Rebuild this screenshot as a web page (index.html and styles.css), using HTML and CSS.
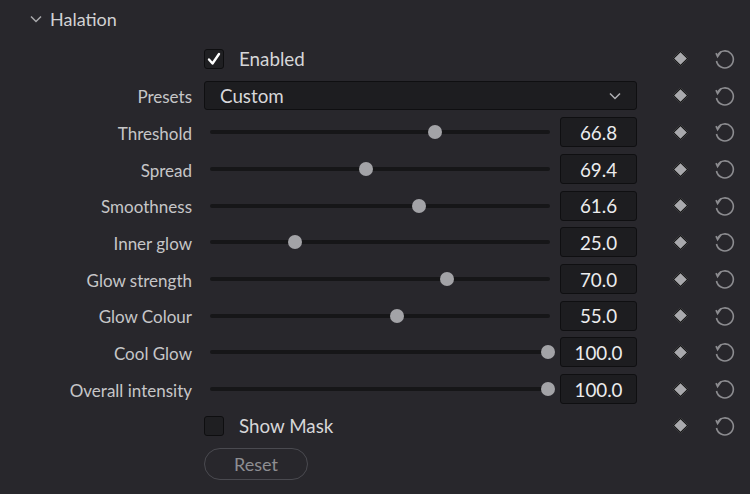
FILE: index.html
```html
<!DOCTYPE html>
<html lang="en">
<head>
  <meta charset="UTF-8">
  <title>Halation</title>
  <link rel="stylesheet" href="styles.css">
</head>
<body>
  <div class="panel">
    <div class="panel-head">
      <svg class="caret" width="14" height="10" viewBox="0 0 14 10"><path d="M2 2.5 L7 7.5 L12 2.5" fill="none" stroke="#a9a9ad" stroke-width="1.5"/></svg>
      <span>Halation</span>
    </div>

    <div class="row">
      <div class="label"></div>
      <div class="main">
        <label class="check"><span class="box checked"><svg width="16" height="16" viewBox="0 0 16 16"><path d="M3 8.5 L6.5 12.5 L13 3" fill="none" stroke="#fff" stroke-width="2.4" stroke-linecap="round" stroke-linejoin="round"/></svg></span>Enabled</label>
      </div>
      <div class="keyframe"></div>
      <svg class="undo" viewBox="0 0 24 24"><path d="M5.6 8 A8.5 8.5 0 1 1 4.5 14" fill="none" stroke="#8c8c90" stroke-width="1.6"/><path d="M8 4.8 L4.6 9.6 L3 6.2" fill="none" stroke="#8c8c90" stroke-width="1.6" transform="translate(1 0)"/></svg>
    </div>

    <div class="row">
      <div class="label">Presets</div>
      <div class="main">
        <div class="select">Custom
          <svg width="14" height="10" viewBox="0 0 14 10"><path d="M2 2.5 L7 7.5 L12 2.5" fill="none" stroke="#b0b0b4" stroke-width="1.5"/></svg>
        </div>
      </div>
      <div class="keyframe"></div>
      <svg class="undo" viewBox="0 0 24 24"><path d="M5.6 8 A8.5 8.5 0 1 1 4.5 14" fill="none" stroke="#8c8c90" stroke-width="1.6"/><path d="M8 4.8 L4.6 9.6 L3 6.2" fill="none" stroke="#8c8c90" stroke-width="1.6" transform="translate(1 0)"/></svg>
    </div>

    <div id="sliders"></div>

    <div class="row">
      <div class="label"></div>
      <div class="main">
        <label class="check"><span class="box"></span>Show Mask</label>
      </div>
      <div class="keyframe"></div>
      <svg class="undo" viewBox="0 0 24 24"><path d="M5.6 8 A8.5 8.5 0 1 1 4.5 14" fill="none" stroke="#8c8c90" stroke-width="1.6"/><path d="M8 4.8 L4.6 9.6 L3 6.2" fill="none" stroke="#8c8c90" stroke-width="1.6" transform="translate(1 0)"/></svg>
    </div>

    <div class="row reset-row">
      <div class="label"></div>
      <div class="main">
        <button class="reset">Reset</button>
      </div>
    </div>
  </div>

  <script>
    // label, shown value, thumb position (%)
    const params = [
      ['Threshold', '66.8', 66.6],
      ['Spread', '69.4', 46.2],
      ['Smoothness', '61.6', 61.8],
      ['Inner glow', '25.0', 25.1],
      ['Glow strength', '70.0', 70.1],
      ['Glow Colour', '55.0', 55.3],
      ['Cool Glow', '100.0', 100],
      ['Overall intensity', '100.0', 100]
    ];

    const undoIcon = '<svg class="undo" viewBox="0 0 24 24"><path d="M5.6 8 A8.5 8.5 0 1 1 4.5 14" fill="none" stroke="#8c8c90" stroke-width="1.6"/><path d="M8 4.8 L4.6 9.6 L3 6.2" fill="none" stroke="#8c8c90" stroke-width="1.6" transform="translate(1 0)"/></svg>';

    const list = document.getElementById('sliders');
    params.forEach(([name, value, pos]) => {
      const row = document.createElement('div');
      row.className = 'row';
      row.innerHTML =
        `<div class="label">${name}</div>
         <div class="main">
           <div class="slider"><div class="rail"></div>
             <div class="travel"><span class="thumb" style="left:${pos}%"></span></div>
           </div>
           <div class="value">${value}</div>
         </div>
         <div class="keyframe"></div>${undoIcon}`;
      list.appendChild(row);
    });
  </script>
</body>
</html>
```

FILE: styles.css
```css
body {
  margin: 0;
  background: #28272c;
  font-family: Lato, "Open Sans", sans-serif;
  color: #c6c6c8;
  font-size: 17px;
}

.panel { width: 750px; }

.panel-head {
  height: 40.6px;
  display: flex;
  align-items: center;
  padding-left: 29px;
  font-size: 18px;
  color: #d2d2d4;
  box-sizing: border-box;
  padding-bottom: 2px;
}
.caret { margin-right: 7px; }

.row {
  height: 36.7px;
  display: flex;
  align-items: center;
}

.label {
  width: 192px;
  text-align: right;
  flex: none;
  white-space: nowrap;
  padding-top: 2px;
}

.main {
  width: 433px;
  margin-left: 12px;
  flex: none;
  display: flex;
  align-items: center;
}

.check {
  display: flex;
  align-items: center;
  font-size: 18.8px;
  color: #d6d6d8;
}
.box {
  width: 20px;
  height: 20px;
  box-sizing: border-box;
  background: #1f1f22;
  border: 1px solid #0e0e10;
  border-radius: 3px;
  margin-right: 15px;
  display: flex;
  align-items: center;
  justify-content: center;
}

.select {
  width: 100%;
  height: 29px;
  box-sizing: border-box;
  background: #1d1d20;
  border: 1px solid #0f0f11;
  border-radius: 3px;
  display: flex;
  align-items: center;
  justify-content: space-between;
  padding: 0 14px 0 15px;
  font-size: 18.8px;
  color: #d8d8da;
}

.slider {
  flex: 1;
  height: 30px;
  position: relative;
  margin-right: 10px;
}
.rail {
  position: absolute;
  left: 6px;
  right: 0;
  top: 13px;
  height: 4px;
  border-radius: 2px;
  background: #161618;
}
.travel {
  position: absolute;
  left: 6px;
  right: 2px;
  top: 0;
  bottom: 0;
}
.thumb {
  position: absolute;
  top: 8px;
  width: 14px;
  height: 14px;
  margin-left: -7px;
  border-radius: 50%;
  background: #a3a3a7;
}

.value {
  width: 77px;
  height: 30px;
  box-sizing: border-box;
  background: #1d1d20;
  border: 1px solid #0f0f11;
  border-radius: 3px;
  display: flex;
  align-items: center;
  justify-content: center;
  font-size: 18.8px;
  color: #ececee;
}

.keyframe {
  width: 9px;
  height: 9px;
  margin-left: 38px;
  background: #a9a9ad;
  border: 1px solid #111;
  transform: rotate(45deg);
  flex: none;
}

.undo {
  width: 24px;
  height: 24px;
  margin-left: 26px;
  flex: none;
}

.reset-row { height: 40px; }

.reset {
  width: 104px;
  height: 32px;
  border: 1px solid #4a4a50;
  border-radius: 16px;
  background: transparent;
  font-family: inherit;
  font-size: 18px;
  color: #8e8e92;
}
```
